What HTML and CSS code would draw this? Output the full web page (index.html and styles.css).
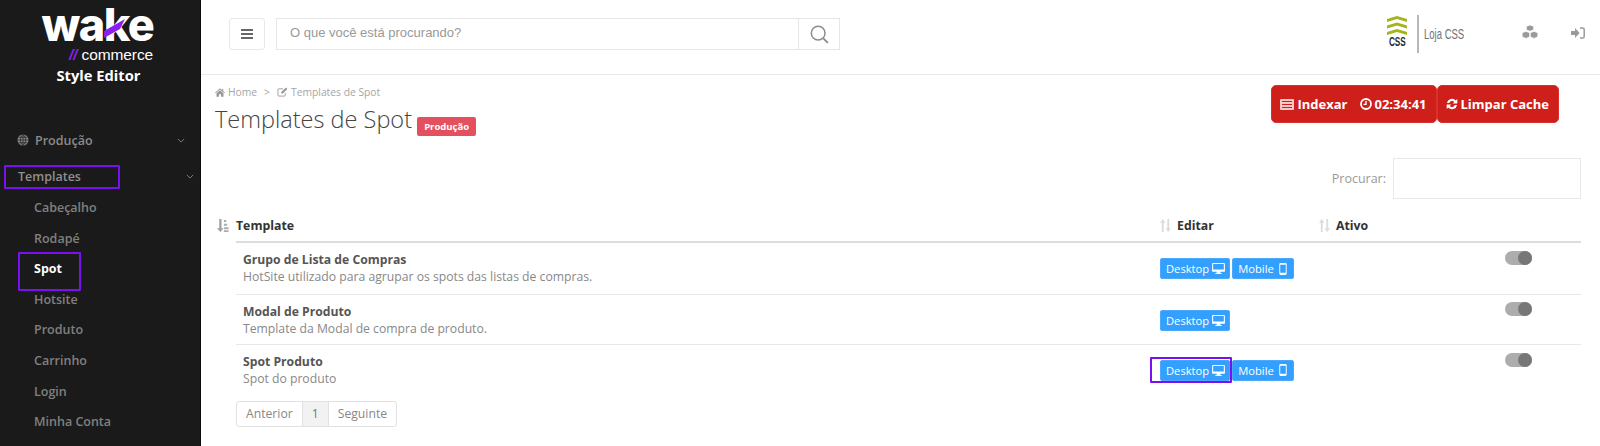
FILE: index.html
```html
<!DOCTYPE html>
<html lang="pt-BR">
<head>
<meta charset="utf-8">
<title>Templates de Spot</title>
<link rel="stylesheet" href="styles.css">
</head>
<body>
<div class="app">
  <aside class="sidebar">
    <div class="brand">
      <div class="wake">wake<svg class="wake-k" viewBox="0 0 22 20"><polygon points="0,12 21,0 16,10 0,19" fill="#8a1ff0"/></svg></div>
      <div class="commerce"><span class="slashes">//</span> commerce</div>
      <div class="style-editor">Style Editor</div>
    </div>
    <nav class="menu">
      <div class="menu-item top">
        <svg class="ic-globe" viewBox="0 0 24 24"><circle cx="12" cy="12" r="11" fill="#8a8a8a"/><path d="M1 12h22M3 6.500h18M3 17.500h18M12 1v22M12 1c-7 6-7 16 0 22M12 1c7 6 7 16 0 22" stroke="#1a1a1a" stroke-width="1.400" fill="none"/></svg>
        <span>Produção</span>
        <svg class="chev" viewBox="0 0 10 6"><path d="M1 1l4 4 4-4" fill="none" stroke="#8a8a8a" stroke-width="1.100"/></svg>
      </div>
      <div class="menu-item tpl">
        <span>Templates</span>
        <svg class="chev" viewBox="0 0 10 6"><path d="M1 1l4 4 4-4" fill="none" stroke="#8a8a8a" stroke-width="1.100"/></svg>
      </div>
      <a class="sub">Cabeçalho</a>
      <a class="sub">Rodapé</a>
      <a class="sub active">Spot</a>
      <a class="sub">Hotsite</a>
      <a class="sub">Produto</a>
      <a class="sub">Carrinho</a>
      <a class="sub">Login</a>
      <a class="sub">Minha Conta</a>
    </nav>
    <div class="mark mark-templates"></div>
    <div class="mark mark-spot"></div>
  </aside>

  <main class="main">
    <header class="topbar">
      <button class="burger"><svg viewBox="0 0 12 10"><path d="M0 1h12M0 5h12M0 9h12" stroke="#666" stroke-width="1.800"/></svg></button>
      <div class="search">
        <div class="search-text">O que você está procurando?</div>
        <div class="search-btn"><svg viewBox="0 0 20 20"><circle cx="8.600" cy="8.600" r="7.200" fill="none" stroke="#8c8c8c" stroke-width="1.600"/><path d="M13.800 13.800l5 5" stroke="#8c8c8c" stroke-width="2"/></svg></div>
      </div>
      <div class="store">
        <div class="css-logo">
          <svg viewBox="0 0 20 19"><path d="M0 3L10 0l10 3v3L10 3 0 6zM0 9.500l10-3 10 3v3l-10-3-10 3zM0 16l10-3 10 3v3l-10-3-10 3z" fill="#a4b51c"/></svg>
          <span>CSS</span>
        </div>
        <div class="store-name"><span>Loja CSS</span></div>
      </div>
      <svg class="ic-cubes" viewBox="0 0 16 14"><path d="M8 0l3.600 1.400v3.400L8 6.200 4.400 4.800V1.400zM4 6.400l3.600 1.400v4L4 13.400.2 11.800v-4zM12 6.400l3.800 1.400v4L12 13.400l-3.600-1.600v-4z" fill="#9a9a9a" stroke="#fff" stroke-width=".6"/></svg>
      <svg class="ic-signin" viewBox="0 0 14 12"><path d="M0 4h4V1l4.600 5L4 11V8H0z" fill="#9a9a9a"/><path d="M9 1h2.600c1 0 1.600.6 1.600 1.600v6.800c0 1-.6 1.600-1.600 1.600H9" fill="none" stroke="#9a9a9a" stroke-width="1.500"/></svg>
    </header>

    <section class="content">
      <div class="page-head">
        <div>
          <div class="crumbs">
            <svg class="ic-home" viewBox="0 0 12 10"><path d="M6 0L0 5.200l.7.7L6 1.400l5.300 4.500.7-.7L9.800 3.300V.8H8.400v1.300zM1.800 6v4h3V7h2.400v3h3V6L6 2.400z" fill="#999"/></svg>
            <span>Home</span><span class="sep">&gt;</span>
            <svg class="ic-edit" viewBox="0 0 12 11"><path d="M9 6.600V9a1 1 0 0 1-1 1H2a1 1 0 0 1-1-1V3a1 1 0 0 1 1-1h4.400" fill="none" stroke="#999" stroke-width="1"/><path d="M4.600 5.600L9.800.6l1.600 1.500-5 5.100H4.600z" fill="#999"/></svg>
            <span>Templates de Spot</span>
          </div>
          <h1>Templates de Spot <span class="badge">Produção</span></h1>
        </div>
        <div class="actions">
          <button class="btn-red">
            <svg class="ic-news" viewBox="0 0 14 11"><rect width="14" height="11" rx="1" fill="#f7c6c6"/><path d="M2 2.500h10M2 5.500h10M2 8.500h10" stroke="#cf1f1b" stroke-width="1"/></svg>
            <span>Indexar</span>
            <svg class="ic-clock" viewBox="0 0 12 12"><circle cx="6" cy="6" r="5" fill="none" stroke="#fff" stroke-width="1.800"/><path d="M6 3v3.400H3.600" fill="none" stroke="#fff" stroke-width="1.400"/></svg>
            <span>02:34:41</span>
          </button>
          <button class="btn-red">
            <svg class="ic-refresh" viewBox="0 0 12 12"><path d="M.9 5A5.200 5.200 0 0 1 9.800 2.400L11.300.9v4.700H6.600l1.700-1.700A3 3 0 0 0 3.200 5zM11.100 7A5.200 5.200 0 0 1 2.200 9.600L.7 11.100V6.400h4.700L3.700 8.100A3 3 0 0 0 8.800 7z" fill="#fff"/></svg>
            <span>Limpar Cache</span>
          </button>
        </div>
      </div>

      <div class="filter"><label>Procurar:</label><div class="filter-input"></div></div>

      <table class="grid">
        <colgroup><col class="c1"><col class="c2"><col class="c3"><col class="c4"></colgroup>
        <thead>
          <tr>
            <th class="th-first"><svg class="ic-sort-a" viewBox="0 0 13 14"><path d="M3 0h2.400v10h2.200L4.200 14 .6 10H3z" fill="#a0a0a0"/><path d="M8 1h2.500v2.200H8zM8 5h3.500v2.200H8zM8 8.800h5V11H8zM8 12h5v2H8z" fill="#adadad"/></svg>Template</th>
            <th><svg class="ic-sort" viewBox="0 0 12 14"><path d="M2 14V4H0l3-4 3 4H4v10zM8 0h2v10h2l-3 4-3-4h2z" fill="#dcdcdc"/></svg>Editar</th>
            <th><svg class="ic-sort" viewBox="0 0 12 14"><path d="M2 14V4H0l3-4 3 4H4v10zM8 0h2v10h2l-3 4-3-4h2z" fill="#dcdcdc"/></svg>Ativo</th>
            <th></th>
          </tr>
        </thead>
        <tbody>
          <tr class="r1">
            <td><strong>Grupo de Lista de Compras</strong><p>HotSite utilizado para agrupar os spots das listas de compras.</p></td>
            <td><span class="btn-blue">Desktop <svg class="ic-desk" viewBox="0 0 14 12"><path d="M1 0h12a1 1 0 0 1 1 1v7.600a1 1 0 0 1-1 1H9v1.200h1.400V12H3.600v-1.200H5V9.600H1a1 1 0 0 1-1-1V1a1 1 0 0 1 1-1zm.2 1.200v6h11.600v-6z" fill="#fff"/></svg></span><span class="btn-blue mob">Mobile <svg class="ic-mob" viewBox="0 0 8 13"><path d="M1.500 0h5A1.500 1.500 0 0 1 8 1.500v10A1.500 1.500 0 0 1 6.500 13h-5A1.500 1.500 0 0 1 0 11.500v-10A1.500 1.500 0 0 1 1.500 0zM1 2v8.500h6V2z" fill="#fff"/></svg></span></td>
            <td></td>
            <td><span class="toggle"></span></td>
          </tr>
          <tr class="r2">
            <td><strong>Modal de Produto</strong><p>Template da Modal de compra de produto.</p></td>
            <td><span class="btn-blue">Desktop <svg class="ic-desk" viewBox="0 0 14 12"><path d="M1 0h12a1 1 0 0 1 1 1v7.600a1 1 0 0 1-1 1H9v1.200h1.400V12H3.600v-1.200H5V9.600H1a1 1 0 0 1-1-1V1a1 1 0 0 1 1-1zm.2 1.200v6h11.600v-6z" fill="#fff"/></svg></span></td>
            <td></td>
            <td><span class="toggle"></span></td>
          </tr>
          <tr class="r3">
            <td><strong>Spot Produto</strong><p>Spot do produto</p></td>
            <td><span class="btn-blue">Desktop <svg class="ic-desk" viewBox="0 0 14 12"><path d="M1 0h12a1 1 0 0 1 1 1v7.600a1 1 0 0 1-1 1H9v1.200h1.400V12H3.600v-1.200H5V9.600H1a1 1 0 0 1-1-1V1a1 1 0 0 1 1-1zm.2 1.200v6h11.600v-6z" fill="#fff"/></svg></span><span class="btn-blue mob">Mobile <svg class="ic-mob" viewBox="0 0 8 13"><path d="M1.500 0h5A1.500 1.500 0 0 1 8 1.500v10A1.500 1.500 0 0 1 6.500 13h-5A1.500 1.500 0 0 1 0 11.500v-10A1.500 1.500 0 0 1 1.500 0zM1 2v8.500h6V2z" fill="#fff"/></svg></span><div class="mark mark-desktop"></div></td>
            <td></td>
            <td><span class="toggle"></span></td>
          </tr>
        </tbody>
      </table>

      <div class="pager"><span>Anterior</span><span class="cur">1</span><span>Seguinte</span></div>
    </section>
  </main>
</div>
</body>
</html>
```
FILE: styles.css
```css
* { box-sizing: border-box; }
html, body { margin: 0; height: 100%; overflow: hidden; background: #fff; }
body { font-family: "Open Sans", sans-serif; color: #777; }
.app { display: flex; height: 446px; }

.sidebar { position: relative; width: 201px; flex: none; background: #1a1a1a; border-right: 1px solid #0c0c0c; }
.brand { height: 117px; display: flex; flex-direction: column; align-items: center; padding-top: 4px; }
.wake { position: relative; font-family: Inter, sans-serif; font-weight: 800; font-size: 45px; line-height: 42px; letter-spacing: -1.5px; color: #fff; margin-left: -5px; }
.wake-k { position: absolute; left: 62px; top: 15px; width: 22px; height: 20px; }
.commerce { font-family: "Liberation Sans", sans-serif; font-size: 15.5px; line-height: 16px; color: #fff; margin-left: 22px; margin-top: 1px; letter-spacing: -.1px; }
.slashes { color: #8a1ff0; font-style: italic; font-weight: 700; }
.style-editor { font-weight: 700; font-size: 14.7px; line-height: 20px; color: #fff; margin-top: 2px; margin-left: -3px; }

.menu { display: flex; flex-direction: column; }
.menu-item { position: relative; display: flex; align-items: center; font-size: 12.5px; font-weight: 600; color: #8a8a8a; }
.menu-item.top { height: 38px; margin-top: 4px; padding-left: 17px; }
.menu-item.tpl { height: 34px; padding-left: 18px; color: #8f8f8f; }
.ic-globe { width: 12px; height: 12px; margin-right: 6px; }
.chev { position: absolute; width: 8px; height: 5px; }
.top .chev { left: 177px; top: 17px; }
.tpl .chev { left: 186px; top: 15px; }
.sub { display: block; height: 30.6px; line-height: 30px; padding-left: 34px; font-size: 12.5px; font-weight: 600; color: #808080; }
.sub.active { color: #fff; font-weight: 700; }

.mark { position: absolute; border: 2px solid #7a10f0; border-radius: 1px; pointer-events: none; }
.mark-templates { left: 4px; top: 165px; width: 116px; height: 24px; }
.mark-spot { left: 18px; top: 252px; width: 63px; height: 39px; }
.mark-desktop { left: -3px; top: 12px; width: 82px; height: 26px; }

.main { flex: 1; min-width: 0; }
.topbar { position: relative; height: 75px; display: flex; align-items: flex-start; border-bottom: 1px solid #e9e9e9; padding: 18px 0 0 28px; }
.burger { flex: none; width: 36px; height: 32px; background: #fff; border: 1px solid #e8e8e8; border-radius: 3px; padding: 0; display: flex; align-items: center; justify-content: center; }
.burger svg { width: 12px; height: 10px; }
.search { flex: none; display: flex; width: 564px; height: 32px; margin-left: 11px; border: 1px solid #e6e6e6; }
.search-text { flex: 1; font-family: "Liberation Sans", sans-serif; font-size: 13px; line-height: 28px; color: #999; padding-left: 13px; }
.search-btn { width: 41px; border-left: 1px solid #e6e6e6; display: flex; align-items: center; justify-content: center; }
.search-btn svg { width: 19px; height: 19px; }
.store { flex: none; display: flex; align-items: flex-start; margin-left: 547px; margin-top: -3px; }
.css-logo { display: flex; flex-direction: column; align-items: center; width: 20px; margin-top: 1px; }
.css-logo svg { width: 20px; height: 19px; flex: none; }
.css-logo span { display: block; font-family: "Liberation Sans", sans-serif; font-weight: 700; font-size: 13px; line-height: 13px; color: #1c2a33; transform: scaleX(.63); }
.store-name { margin-left: 10px; width: 45px; border-left: 2px solid #b5b7bb; height: 38px; padding-left: 5px; font-family: "Liberation Sans", sans-serif; font-size: 14px; line-height: 38px; color: #6e7378; white-space: nowrap; }
.store-name span { display: inline-block; transform: scaleX(.68); transform-origin: left center; }
.ic-cubes { flex: none; width: 16px; height: 14px; margin: 7px 0 0 60px; }
.ic-signin { flex: none; width: 14px; height: 12px; margin: 9px 0 0 33px; }

.content { position: relative; padding: 0 19px 0 14px; }
.page-head { display: flex; justify-content: space-between; height: 83px; padding-right: 22px; }
.crumbs { display: flex; align-items: center; height: 16px; margin-top: 9px; font-size: 10.3px; color: #a5a5a5; }
.ic-home { width: 10px; height: 9px; margin-right: 3px; }
.sep { margin: 0 7px; }
.ic-edit { width: 11px; height: 10px; margin-right: 3px; }
h1 { margin: 3px 0 0; font-size: 23.5px; font-weight: 300; line-height: 33px; color: #444; }
.badge { display: inline-block; vertical-align: -2px; margin-left: -1px; height: 19px; padding: 0 7px; border-radius: 2px; background: #e5505f; color: #fff; font-size: 9.5px; font-weight: 700; line-height: 19px; }
.actions { display: flex; align-items: flex-start; margin-top: 10px; }
.btn-red { display: flex; align-items: center; height: 38px; padding: 0 9px 0 8px; background: #cf1f1b; border: 1px solid #d8312d; border-radius: 5px; color: #fff; font-family: "Open Sans", sans-serif; font-size: 13px; font-weight: 700; }
.ic-news { width: 14px; height: 11px; margin-right: 3px; }
.ic-clock { width: 12px; height: 12px; margin: 0 3px 0 12px; }
.ic-refresh { width: 12px; height: 12px; margin-right: 3px; }

.filter { display: flex; justify-content: flex-end; align-items: center; height: 41px; }
.filter label { font-size: 12.5px; color: #999; margin-right: 7px; }
.filter-input { width: 188px; height: 41px; border: 1px solid #e8e8e8; }

.grid { table-layout: fixed; width: 1345px; margin: 8px 0 0 21px; border-collapse: collapse; }
.c1 { width: 917px; } .c2 { width: 159px; } .c3 { width: 186px; } .c4 { width: 83px; }
.grid th { height: 35px; padding: 3px 7px 0; text-align: left; font-size: 12.3px; font-weight: 700; color: #333; border-bottom: 2px solid #ddd; }
.grid .th-first { padding-left: 0; }
.ic-sort-a { width: 13px; height: 13px; margin-left: -20px; margin-right: 7px; vertical-align: -2px; }
.ic-sort { width: 11px; height: 13px; margin-right: 6px; vertical-align: -2px; }
.grid td { padding: 0 7px; vertical-align: top; border-bottom: 1px solid #e8e8e8; position: relative; }
.grid tr.r3 td { border-bottom: 0; }
.r1 td { height: 52px; } .r2 td { height: 50px; } .r3 td { height: 50px; }
.grid strong { display: block; font-size: 12.2px; line-height: 18px; color: #555; font-weight: 700; padding-top: 8px; height: 25px; }
.grid p { margin: 0; font-size: 12.2px; line-height: 18px; color: #888; }
.btn-blue { display: inline-flex; align-items: center; height: 21px; padding: 0 4px 0 5px; margin: 15px 2px 0 0; background: #33a0ff; border: 1px solid #4aa9fb; border-radius: 2px; color: #fff; font-size: 11.2px; }
.btn-blue.mob { padding-right: 6px; }
.ic-desk { width: 13px; height: 11px; margin-left: 3px; }
.ic-mob { width: 8px; height: 12px; margin-left: 5px; }
.toggle { position: relative; display: block; width: 27px; height: 14px; margin: 7px 0 0 0; border-radius: 7px; background: #adadad; }
.r1 .toggle, .r3 .toggle { margin-top: 8px; }
.toggle::after { content: ""; position: absolute; right: 0; top: 0; width: 14px; height: 14px; border-radius: 50%; background: #777; }

.pager { display: inline-flex; height: 26px; margin: 7px 0 0 21px; border: 1px solid #e2e2e2; border-radius: 3px; font-size: 12.2px; line-height: 24px; color: #888; }
.pager span { padding: 0 9px; }
.pager .cur { background: #f2f2f2; border-left: 1px solid #e2e2e2; border-right: 1px solid #e2e2e2; color: #777; }
```
